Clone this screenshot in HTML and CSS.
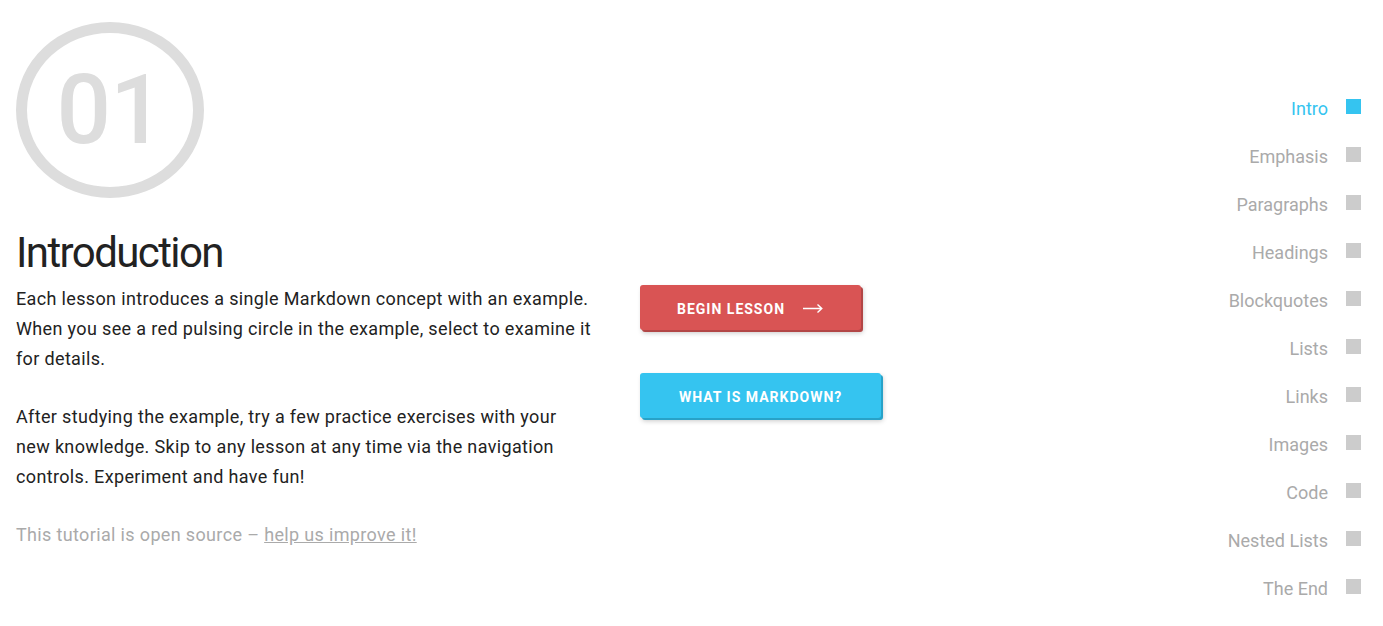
FILE: index.html
```html
<!DOCTYPE html>
<html lang="en">
<head>
<meta charset="utf-8">
<title>Markdown Tutorial – Intro</title>
<link rel="stylesheet" href="styles.css">
</head>
<body>
<div class="page">
  <main class="lesson">
    <section class="intro">
      <div class="badge"><span class="badge-num">01</span></div>
      <h1 class="title">Introduction</h1>
      <p class="copy">Each lesson introduces a single Markdown concept with an example. When you see a red pulsing circle in the example, select to examine it for details.</p>
      <p class="copy">After studying the example, try a few practice exercises with your new knowledge. Skip to any lesson at any time via the navigation controls. Experiment and have fun!</p>
      <p class="copy note">This tutorial is open source – <a class="note-link" href="#">help us improve it!</a></p>
    </section>
    <div class="actions">
      <a class="btn btn-red" href="#">
        <span>Begin Lesson</span>
        <svg class="btn-arrow" width="20" height="10" viewBox="0 0 20 10" aria-hidden="true"><path d="M0 5.5H18.5M14.5 1.5L18.8 5.5L14.5 9.5" fill="none" stroke="#fff" stroke-width="1.4"/></svg>
      </a>
      <a class="btn btn-blue" href="#"><span>What is Markdown?</span></a>
    </div>
  </main>
  <nav class="toc">
    <ul class="toc-list">
      <li class="toc-item active"><span class="toc-label">Intro</span><span class="toc-dot"></span></li>
      <li class="toc-item"><span class="toc-label">Emphasis</span><span class="toc-dot"></span></li>
      <li class="toc-item"><span class="toc-label">Paragraphs</span><span class="toc-dot"></span></li>
      <li class="toc-item"><span class="toc-label">Headings</span><span class="toc-dot"></span></li>
      <li class="toc-item"><span class="toc-label">Blockquotes</span><span class="toc-dot"></span></li>
      <li class="toc-item"><span class="toc-label">Lists</span><span class="toc-dot"></span></li>
      <li class="toc-item"><span class="toc-label">Links</span><span class="toc-dot"></span></li>
      <li class="toc-item"><span class="toc-label">Images</span><span class="toc-dot"></span></li>
      <li class="toc-item"><span class="toc-label">Code</span><span class="toc-dot"></span></li>
      <li class="toc-item"><span class="toc-label">Nested Lists</span><span class="toc-dot"></span></li>
      <li class="toc-item"><span class="toc-label">The End</span><span class="toc-dot"></span></li>
    </ul>
  </nav>
</div>
</body>
</html>
```

FILE: styles.css
```css
* { box-sizing: border-box; }

html, body {
  margin: 0;
  padding: 0;
  background: #fff;
}

body {
  font-family: Roboto, "Liberation Sans", sans-serif;
  color: #222;
  overflow: hidden;
}

.page {
  display: flex;
  justify-content: space-between;
  min-height: 626px;
}

.lesson {
  display: flex;
  padding-left: 16px;
}

.intro {
  width: 578px;
}

.badge {
  margin-top: 22px;
  width: 188px;
  height: 176px;
  border: 11px solid #ddd;
  border-radius: 50%;
  display: flex;
  align-items: center;
  justify-content: center;
}

.badge-num {
  font-size: 96px;
  font-weight: 500;
  line-height: 1;
  color: #ddd;
  letter-spacing: -1px;
}

.title {
  margin: 30px 0 6px;
  font-size: 42px;
  line-height: 50px;
  font-weight: 400;
  letter-spacing: -1.6px;
  color: #222;
}

.copy {
  margin: 0 0 28px;
  font-size: 18px;
  line-height: 30px;
  letter-spacing: 0.35px;
  color: #222;
}

.note {
  color: #aaa;
}

.note-link {
  color: #aaa;
  text-decoration: underline;
}

.actions {
  display: flex;
  flex-direction: column;
  align-items: flex-start;
  gap: 43px;
  margin-left: 46px;
  padding-top: 285px;
}

.btn {
  display: inline-flex;
  align-items: center;
  gap: 18px;
  height: 45px;
  padding: 3px 38px 0 37px;
  border-radius: 3px;
  color: #fff;
  font-size: 14px;
  font-weight: 700;
  letter-spacing: 1px;
  text-transform: uppercase;
  text-decoration: none;
}

.btn-red {
  background: #d95454;
  box-shadow: 2px 2px 0 #b24646, 2px 3px 5px rgba(0, 0, 0, 0.22);
}

.btn-blue {
  padding: 3px 39px 0;
  background: #35c4f0;
  box-shadow: 2px 2px 0 #28a2c8, 2px 3px 5px rgba(0, 0, 0, 0.22);
}

.btn-arrow {
  display: block;
  margin-top: -3px;
}

.toc {
  padding: 84px 22px 0 0;
}

.toc-list {
  list-style: none;
  margin: 0;
  padding: 0;
}

.toc-item {
  display: flex;
  align-items: center;
  justify-content: flex-end;
  gap: 18px;
  height: 48px;
  font-size: 18px;
  color: #aaa;
}

.toc-dot {
  width: 15px;
  height: 15px;
  background: #ccc;
  margin-top: -3px;
}

.toc-item.active {
  color: #35c4f0;
}

.toc-item.active .toc-dot {
  background: #35c4f0;
}
```
